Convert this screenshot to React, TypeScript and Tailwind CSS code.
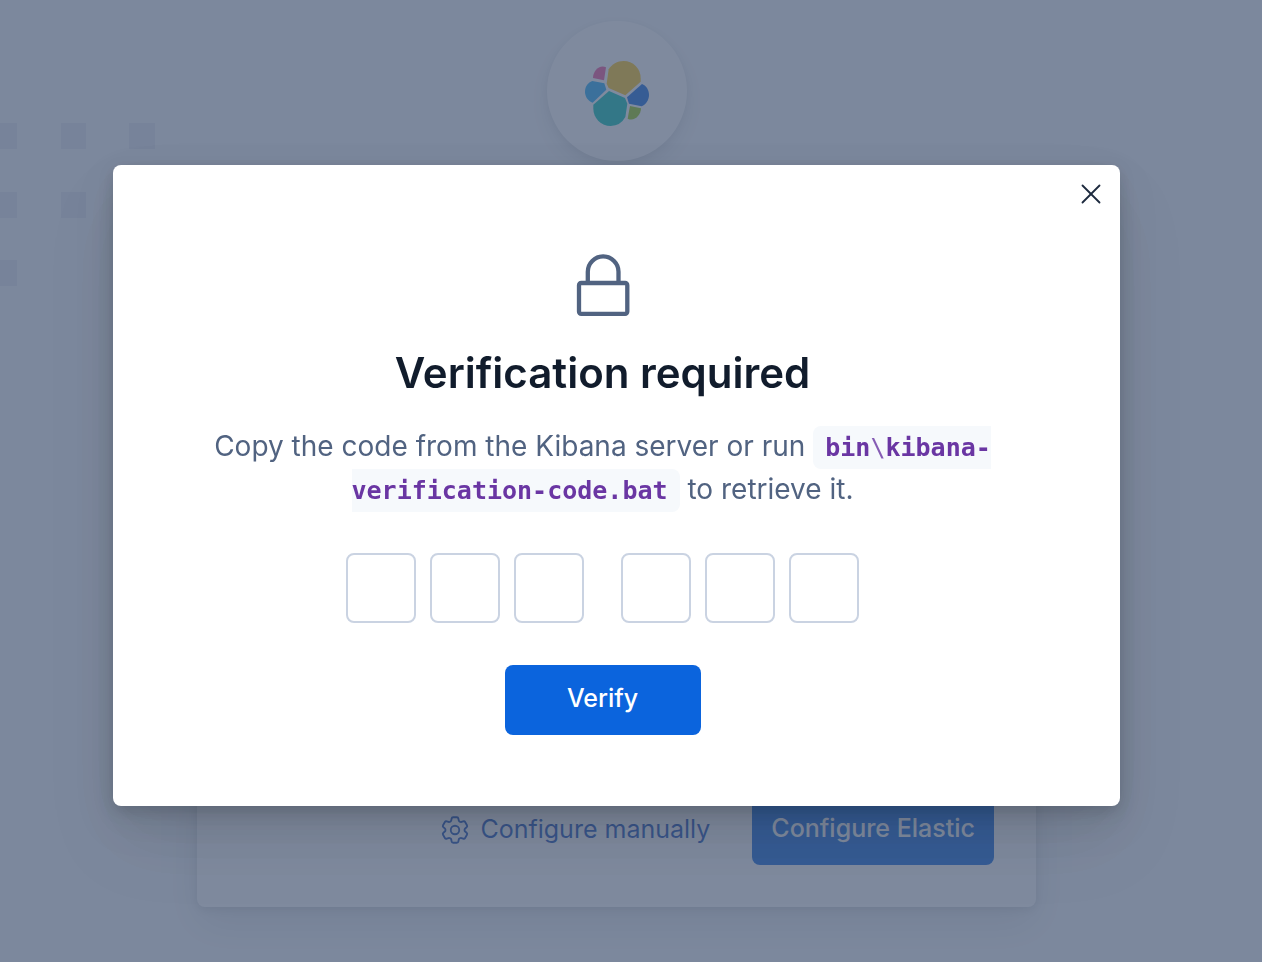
import { X } from "lucide-react";
import { HiOutlineCog6Tooth } from "react-icons/hi2";

const DIGITS = [1, 2, 3, 4, 5, 6];

function ElasticLogo() {
	return (
		<svg viewBox="0 0 192 196" className="w-16" aria-hidden="true">
			<path fill="#fec514" d="M71 81 121 103 167 62V51A51 51 0 0 0 116 0C97 0 80 10 71 25L65 68Z" />
			<path fill="#00bfb3" d="M72 90 120 111 127 128 121 168A52 52 0 0 1 77 195 52 52 0 0 1 25 143V131Z" />
			<path fill="#0b64dd" d="M126 109 171 69C183 73 192 87 192 102 192 117 183 130 170 136L132 128Z" />
			<path fill="#1ba9f5" d="M23 125 64 86 58 67 22 60C9 65 0 76 0 92 0 107 9 120 23 125Z" />
			<path fill="#f04e98" d="M57 58 24 51C24 30 43 10 63 19Z" />
			<path fill="#93c90e" d="M135 135 168 142C168 163 147 183 128 173Z" />
		</svg>
	);
}

function LockIcon() {
	return (
		<svg
			viewBox="0 0 56 64"
			className="h-16 w-14 text-[#516381]"
			fill="none"
			stroke="currentColor"
			strokeWidth="4.3"
			aria-hidden="true"
		>
			<rect x="4" y="30" width="48.3" height="30.8" rx="2.2" />
			<path d="M12.8 30V18.8a15.3 15.3 0 0 1 30.7 0V30" />
		</svg>
	);
}

function Squares() {
	return (
		<svg className="absolute top-0 left-0 h-72 w-40 text-[#e3e8f0]" fill="currentColor" aria-hidden="true">
			<path d="M-8 123h25v26H-8zM61 123h25v26H61zM129 123h26v26h-26zM-8 192h25v26H-8zM61 192h25v26H61zM-8 260h25v26H-8z" />
		</svg>
	);
}

function SetupPage() {
	return (
		<div className="relative flex min-h-screen flex-col items-center overflow-hidden bg-[#f6f9fc] pt-[21px] pr-[29px]">
			<Squares />
			<div className="flex size-[140px] items-center justify-center rounded-full bg-white pt-1.5 shadow-[0_2px_8px_rgba(0,0,0,0.06),0_10px_24px_rgba(0,0,0,0.1)]">
				<ElasticLogo />
			</div>
			<div className="mt-28 flex min-h-[634px] w-full max-w-[839px] items-end justify-end rounded-lg bg-white p-[42px] shadow-[0_3px_10px_rgba(0,0,0,0.1),0_18px_42px_rgba(0,0,0,0.1)]">
				<div className="flex items-center gap-[42px] text-[25px]">
					<button type="button" className="flex items-center gap-2 font-normal text-[#1750ba]">
						<HiOutlineCog6Tooth className="size-[34px]" strokeWidth="1.3" />
						Configure manually
					</button>
					<button
						type="button"
						className="h-[70px] rounded-lg bg-[#0b64dd] px-[19px] pb-0.5 font-medium text-white"
					>
						Configure Elastic
					</button>
				</div>
			</div>
		</div>
	);
}

function VerificationModal() {
	return (
		<div className="fixed inset-0 flex items-center justify-center bg-[#485975]/70 pt-[9px] pr-[29px]">
			<div
				role="dialog"
				aria-modal="true"
				aria-labelledby="verification-title"
				className="relative w-full max-w-[1007px] rounded-lg bg-white shadow-[0_5px_16px_rgba(0,0,0,0.14),0_16px_42px_rgba(0,0,0,0.1),0_38px_75px_rgba(0,0,0,0.08)]"
			>
				<button type="button" aria-label="Close" className="absolute top-2.5 right-2.5 p-0.5 text-[#1d2a3e]">
					<X className="size-[34px]" strokeWidth={1.3} />
				</button>
				<form className="flex flex-col items-center pt-[88px] pr-[124px] pb-[71px] pl-24 text-center">
					<LockIcon />
					<h1 id="verification-title" className="mt-7 text-[42px] leading-[56px] font-semibold text-[#111c2c]">
						Verification required
					</h1>
					<p className="mt-6 text-[28px] leading-[43px] text-[#516381]">
						Copy the code from the Kibana server or run{" "}
						<code className="rounded-lg bg-[#f6f9fc] px-3 py-[7px] font-['DejaVu_Sans_Mono',monospace] text-[25px] leading-none font-bold text-[#6a36a3]">
							bin<span className="font-normal opacity-80">\</span>kibana-verification-code.bat
						</code>{" "}
						to retrieve it.
					</p>
					<div className="mt-[42px] flex gap-[14px]">
						{DIGITS.map((digit) => (
							<input
								key={digit}
								type="text"
								inputMode="numeric"
								maxLength={1}
								aria-label={`Digit ${digit}`}
								className="size-[70px] rounded-lg border-2 border-[#cad3e2] bg-white text-center text-[28px] text-[#1d2a3e] nth-[4]:ml-[23px]"
							/>
						))}
					</div>
					<button
						type="submit"
						className="mt-[42px] h-[70px] w-[196px] rounded-lg bg-[#0b64dd] pb-0.5 text-[25px] font-medium text-white"
					>
						Verify
					</button>
				</form>
			</div>
		</div>
	);
}

export default function App() {
	return (
		<main className="font-[Inter,sans-serif]">
			<SetupPage />
			<VerificationModal />
		</main>
	);
}
